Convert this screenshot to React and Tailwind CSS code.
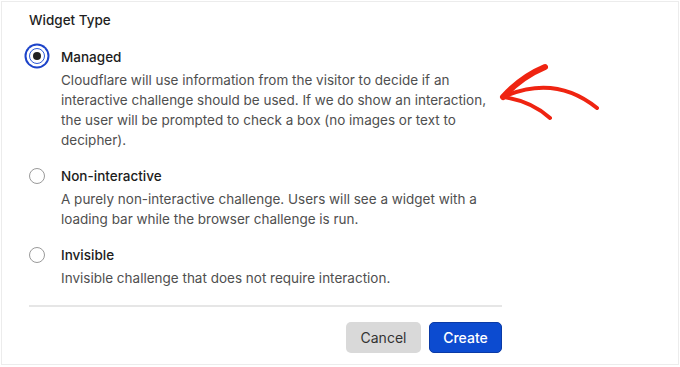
const options = [
  {
    id: "managed",
    label: "Managed",
    lines: [
      "Cloudflare will use information from the visitor to decide if an",
      "interactive challenge should be used. If we do show an interaction,",
      "the user will be prompted to check a box (no images or text to",
      "decipher).",
    ],
  },
  {
    id: "non-interactive",
    label: "Non-interactive",
    lines: [
      "A purely non-interactive challenge. Users will see a widget with a",
      "loading bar while the browser challenge is run.",
    ],
  },
  {
    id: "invisible",
    label: "Invisible",
    lines: ["Invisible challenge that does not require interaction."],
  },
];

const Radio = ({ checked }) => {
  if (checked) {
    return (
      <span className="-mt-[2px] w-4 h-4 rounded-full border-[1.5px] border-[#2d5ad6] bg-white flex items-center justify-center shadow-[0_0_0_2.5px_#fff,0_0_0_4.5px_#1c43c9]">
        <span className="w-2 h-2 rounded-full bg-[#222]" />
      </span>
    );
  }
  return <span className="w-4 h-4 rounded-full border-[1.5px] border-[#9a9a9a] bg-white" />;
};

const Arrow = () => (
  <svg
    className="absolute left-0 top-0 pointer-events-none"
    width="680"
    height="367"
    viewBox="0 0 680 367"
    fill="none"
  >
    <g stroke="#ef2411" strokeLinecap="round" strokeLinejoin="round">
      <path d="M503 97 Q555 74 597 108" strokeWidth="4" />
      <path d="M503 97 Q521 77 545 67" strokeWidth="6" />
      <path d="M503 97 Q531 101 550 118" strokeWidth="4" />
    </g>
  </svg>
);

export default function App() {
  const selected = options[0].id;

  return (
    <div
      className="relative w-[680px] h-[367px] bg-white pt-px pl-px overflow-hidden"
      style={{ fontFamily: "Inter, 'Noto Sans', sans-serif" }}
    >
      <div className="w-[678px] h-[364px] border border-[#ececec] pl-[27px] pt-[8px]">
        <div className="w-[473px]">
          <h2 className="text-[13.5px] leading-[20px] font-medium text-[#1f1f1f]">Widget Type</h2>

          <div className="mt-[16px] flex flex-col gap-[15px]">
            {options.map((opt) => (
              <div key={opt.id} className="flex gap-[16px]">
                <div className="w-4 h-[22px] flex items-center justify-center shrink-0">
                  <Radio checked={selected === opt.id} />
                </div>
                <div className="text-[13.5px]">
                  <div className="leading-[22px] font-medium text-[#1c1c1c]">{opt.label}</div>
                  <div className="mt-[2px]">
                    {opt.lines.map((line) => (
                      <div key={line} className="leading-[20px] text-[#4f4f4f] whitespace-nowrap">
                        {line}
                      </div>
                    ))}
                  </div>
                </div>
              </div>
            ))}
          </div>

          <div className="mt-[17px] h-[2px] bg-[#e6e6e6]" />

          <div className="mt-[15px] flex justify-end gap-2">
            <button className="w-[75px] h-[31px] rounded-[5px] bg-[#d9d9d9] text-[14px] text-[#333]">
              Cancel
            </button>
            <button className="w-[73px] h-[31px] rounded-[5px] bg-[#0c4bd0] border border-[#0a3aa6] text-[14px] font-medium text-white">
              Create
            </button>
          </div>
        </div>
      </div>
      <Arrow />
    </div>
  );
}
